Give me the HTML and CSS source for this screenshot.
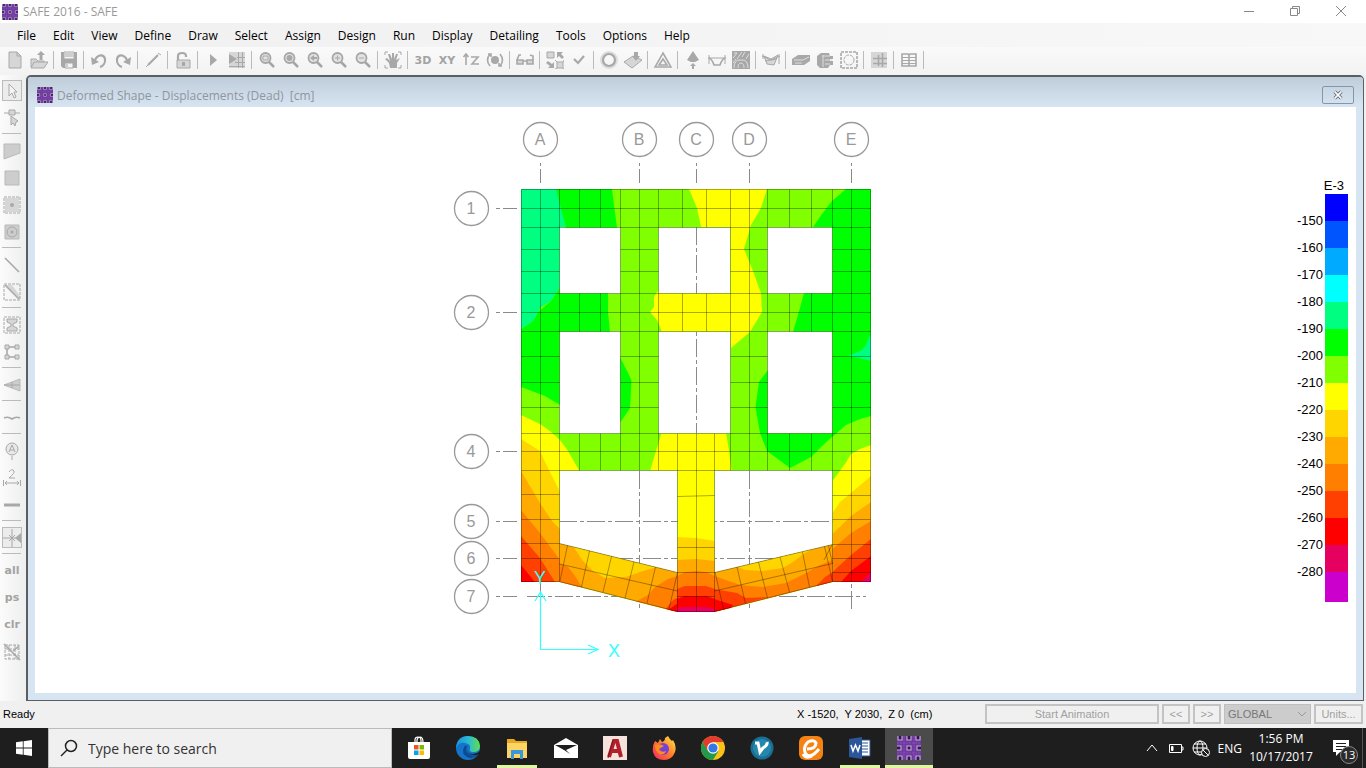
FILE: index.html
```html
<!DOCTYPE html>
<html lang="en">
<head>
    <meta charset="UTF-8">
    <meta name="viewport" content="width=device-width, initial-scale=1.0">
    <title>SAFE 2016 - SAFE</title>
    <link rel="stylesheet" href="styles.css">
</head>
<body>

<!-- Shared symbols -->
<svg class="symbols" aria-hidden="true">
    <symbol id="safe" viewBox="0 0 24 24">
        <rect width="24" height="24" fill="#7038a2"/>
        <path d="M0 7H24M0 17H24M7 0V24M17 0V24" stroke="#8352b0" stroke-width="1" stroke-dasharray="2 1"/>
        <g fill="#35184f" stroke="#c3b0d2" stroke-width="1.1">
            <path d="M1 0V4H5V0M10 0V4H14V0M19 0V4H23V0M1 24V20H5V24M10 24V20H14V24M19 24V20H23V24"/>
            <path d="M0 10H4V14H0M24 10H20V14H24M10 10H14V14H10Z"/>
        </g>
    </symbol>
    <symbol id="lens" viewBox="0 0 18 18">
        <circle cx="7.5" cy="7" r="5" fill="#e2e2e2" stroke="#a6a6a6" stroke-width="1.8"/>
        <path d="M11 11L16 16" stroke="#a6a6a6" stroke-width="2.5"/>
    </symbol>
</svg>

<header class="titlebar">
    <svg class="app-icon"><use href="#safe"/></svg>
    <h1 class="app-name">SAFE 2016 - SAFE</h1>
    <div class="window-buttons">
        <button aria-label="Minimize"><svg viewBox="0 0 12 12"><path d="M1 6.5H11"/></svg></button>
        <button aria-label="Restore"><svg viewBox="0 0 12 12"><path d="M1.5 3.5H8.5V10.5H1.5ZM3.5 3V1.5H10.5V8.5H9"/></svg></button>
        <button aria-label="Close"><svg viewBox="0 0 12 12"><path d="M1 1L11 11M11 1L1 11"/></svg></button>
    </div>
</header>

<nav class="menu">
    <button>File</button>
    <button>Edit</button>
    <button>View</button>
    <button>Define</button>
    <button>Draw</button>
    <button>Select</button>
    <button>Assign</button>
    <button>Design</button>
    <button>Run</button>
    <button>Display</button>
    <button>Detailing</button>
    <button>Tools</button>
    <button>Options</button>
    <button>Help</button>
</nav>

<div class="toolbar">
    <button aria-label="New model"><svg viewBox="0 0 18 18"><path class="soft" d="M3 1H11L15 5V17H3Z"/><path d="M11 1V5H15"/></svg></button>
    <button aria-label="Open"><svg viewBox="0 0 18 18"><path class="soft" d="M1 8H6L8 10H14V16H1Z"/><path class="soft" d="M4 11H18L14 17H1Z"/><path class="dark" d="M11 0L15 4H12.5V9H9.5V4H7Z"/></svg></button>
    <span class="sep"></span>
    <button aria-label="Save"><svg viewBox="0 0 18 18"><path class="dark" d="M1 1H17V17H3L1 15Z"/><path class="light" d="M4 1H14V8H4ZM5 12H13V17H5Z"/><path d="M5 3H13M5 5H13M7 13V16"/></svg></button>
    <span class="sep"></span>
    <button aria-label="Undo"><svg viewBox="0 0 18 18"><path class="dark" d="M1 6L2 14L9 11Z"/><path class="arc" d="M5 9C8 3 14 3 15 8C15.5 12 13 15 10 16"/></svg></button>
    <button aria-label="Redo"><svg viewBox="0 0 18 18"><path class="dark" d="M17 6L16 14L9 11Z"/><path class="arc" d="M13 9C10 3 4 3 3 8C2.5 12 5 15 8 16"/></svg></button>
    <span class="sep"></span>
    <button aria-label="Refresh"><svg viewBox="0 0 18 18"><path class="arc" d="M4 14L14 4"/><path d="M2 16L4 14M14 2L17 4"/></svg></button>
    <span class="sep"></span>
    <button aria-label="Lock model"><svg viewBox="0 0 18 18"><path class="arc" d="M4 10V5Q4 2 8 2Q12 2 12 5V6"/><path class="soft" d="M3 9H16V17H3Z"/><path class="dark" d="M8 11H11V15H8Z"/></svg></button>
    <span class="sep"></span>
    <button aria-label="Run analysis"><svg viewBox="0 0 18 18"><path class="dark" d="M6 3L13 9L6 15Z"/></svg></button>
    <button aria-label="Run design"><svg viewBox="0 0 18 18"><path class="soft plain" d="M1 1H17V17H1Z"/><path class="dark" d="M1 3L9 8L1 13Z"/><path d="M1 15.5H17M7 11.5H17M10.5 1V17M14.5 1V17M9 6.5H17"/></svg></button>
    <span class="sep"></span>
    <button aria-label="Rubber band zoom"><svg viewBox="0 0 18 18"><use href="#lens"/><path d="M5 5H10V9H5Z"/></svg></button>
    <button aria-label="Zoom all"><svg viewBox="0 0 18 18"><use href="#lens"/><circle class="dark" cx="7.5" cy="7" r="3"/></svg></button>
    <button aria-label="Previous zoom"><svg viewBox="0 0 18 18"><use href="#lens"/><path class="dark" d="M4 7L8 4V6H11V8H8V10Z"/></svg></button>
    <button aria-label="Zoom in"><svg viewBox="0 0 18 18"><use href="#lens"/><path d="M5 7H10M7.5 4.5V9.5"/></svg></button>
    <button aria-label="Zoom out"><svg viewBox="0 0 18 18"><use href="#lens"/><path d="M5 7H10"/></svg></button>
    <span class="sep"></span>
    <button aria-label="Pan"><svg viewBox="0 0 18 18"><path d="M1 4V1H4M14 1H17V4M1 14V17H4M14 17H17V14"/><path class="dark" d="M6 17L5 12L1 8L3 7L6 10L4 3L6 3L8 8V2H10V8L12 3H14L12 9L16 7L13 12V17Z"/></svg></button>
    <span class="sep"></span>
    <button class="view">3D</button>
    <button class="view">XY</button>
    <button class="view" aria-label="Elevation view"><svg viewBox="0 0 18 18"><path class="mid" d="M4 14V4M1.5 6L4 3L6.5 6M9 6H16L10 13H17"/></svg></button>
    <button aria-label="Rotate view"><svg viewBox="0 0 18 18"><circle class="dark" cx="9" cy="9" r="4"/><path class="mid" d="M4 3Q-1 9 4 15M14 3Q19 9 14 15M2 3H5V6M16 15H13V12"/></svg></button>
    <span class="sep"></span>
    <button aria-label="Display options"><svg viewBox="0 0 18 18"><path class="mid soft" d="M1 9H7V13H1ZM11 9H17V13H11Z"/><path class="mid" d="M7 10H11M1 9L3 4H5M17 9V5L14 4"/></svg></button>
    <span class="sep"></span>
    <button aria-label="Assign to group"><svg viewBox="0 0 18 18"><path class="soft" d="M1 1H8V7H1ZM11 11H17V17H11Z"/><path class="dark" d="M11 1H17L15 3L18 6L16 8L13 5L11 7ZM8 17H2L4 15L0 12L2 10L6 13L8 11Z"/><path d="M9 9L11 11M17 11L18 9M17 17L18 18M11 17L9 18"/></svg></button>
    <button aria-label="Check"><svg viewBox="0 0 18 18"><path class="arc" d="M4 8L8 12L14 5"/></svg></button>
    <span class="sep"></span>
    <button aria-label="Show undeformed"><svg viewBox="0 0 18 18"><circle class="halo" cx="9" cy="9" r="7"/><circle class="arc" cx="9" cy="9" r="6"/></svg></button>
    <button aria-label="Show loads"><svg viewBox="0 0 18 18"><path class="soft" d="M0 11L9 5L18 9L8 17Z"/><path class="dark" d="M10 1H14V5H16L12 10L8 5H10Z"/></svg></button>
    <span class="sep"></span>
    <button aria-label="Show deformed shape"><svg viewBox="0 0 18 18"><path class="mid" d="M9 2L17 16H1ZM9 8L13 14H5Z"/></svg></button>
    <span class="sep"></span>
    <button aria-label="Show reactions"><svg viewBox="0 0 18 18"><path class="dark" d="M9 0L15 9L11 11H7L3 9ZM9 12L12 15H10V18H8V15H6Z"/></svg></button>
    <button aria-label="Show strip forces"><svg viewBox="0 0 18 18"><path d="M0 7H18M1 4V13M17 4V13"/><path class="mid" d="M1 7Q4 8 6 14H12Q14 8 17 7"/></svg></button>
    <button aria-label="Show slab stresses"><svg viewBox="0 0 18 18"><path class="dark" d="M0 0H18V18H0Z"/><path class="pale" d="M2 17Q2 8 9 9Q16 8 16 17M6 17Q6 12 9 12Q12 12 12 17M1 7L5 2M5 8L10 1M10 6L13 1M14 8L17 3M1 12L4 8M2 2H5"/></svg></button>
    <span class="sep"></span>
    <button aria-label="Show design"><svg viewBox="0 0 18 18"><path class="soft" d="M2 5L5 13L12 14L16 4L9 8Z"/><path d="M0 5L9 9L18 5M1 3V8M17 3V13M3 10L15 8"/></svg></button>
    <span class="sep"></span>
    <button aria-label="Beam section"><svg viewBox="0 0 18 18"><path class="dark" d="M0 8L6 4H18V10L12 14H0Z"/><path class="pale" d="M2 9H11L17 6M3 12H10"/></svg></button>
    <button aria-label="Slab section"><svg viewBox="0 0 18 18"><path class="dark" d="M1 5L5 2H13L14 5H17V8H14V10H17V14H14L12 17H4L1 14Z"/><path class="pale" d="M6 5H14M9 9H16M9 13H14M7 4V16"/></svg></button>
    <button aria-label="Select region"><svg viewBox="0 0 18 18"><path class="dash mid" d="M1 1H17V17H1Z"/><circle class="dash" cx="9" cy="9" r="5"/></svg></button>
    <span class="sep"></span>
    <button aria-label="Show grid"><svg viewBox="0 0 18 18"><path class="soft plain" d="M1 1H17V17H1Z"/><path class="mid" d="M3 7.5H17M3 12.5H17M8.5 4V15M12.5 2V16"/></svg></button>
    <span class="sep"></span>
    <button aria-label="Show tables"><svg viewBox="0 0 18 18"><path class="mid" d="M2 3H8L9 4L10 3H16V15H2ZM9 4V15"/><path d="M2 6.5H16M2 9.5H16M2 12.5H16"/></svg></button>
    <span class="sep"></span>
</div>

<main class="workspace">
    <div class="side-tools">
        <button class="pressed" aria-label="Select"><svg viewBox="0 0 18 18"><path class="light" d="M6 2V14L9 11L11 16L13 15L11 10H14Z"/></svg></button>
        <button aria-label="Reshape"><svg viewBox="0 0 18 18"><path d="M1 4H17"/><path class="soft" d="M6 1H12V6H6ZM8 7V16L10 14L12 17L13 13L15 12Z"/></svg></button>
        <span class="rule"></span>
        <button aria-label="Draw area"><svg viewBox="0 0 18 18"><path class="shade" d="M1 2H17V11L1 17Z"/></svg></button>
        <button aria-label="Draw rectangle"><svg viewBox="0 0 18 18"><path class="shade" d="M2 2H16V16H2Z"/></svg></button>
        <button aria-label="Quick draw area"><svg viewBox="0 0 18 18"><path class="soft plain" d="M2 2H16V16H2Z"/><path class="dash" d="M1 1H17V17H1Z"/><circle class="dark" cx="9" cy="9" r="2"/></svg></button>
        <button aria-label="Draw around point"><svg viewBox="0 0 18 18"><path class="shade" d="M2 2H16V16H2Z"/><circle cx="9" cy="9" r="5"/><circle class="dark" cx="9" cy="9" r="1.5"/></svg></button>
        <span class="rule"></span>
        <button aria-label="Draw line"><svg viewBox="0 0 18 18"><path class="mid" d="M2 2L16 16"/></svg></button>
        <button aria-label="Quick draw line"><svg viewBox="0 0 18 18"><path class="soft plain" d="M2 2H9L17 13V16Z"/><path class="dash" d="M1 1H17V17H1Z"/><path class="mid" d="M2 2L16 16"/></svg></button>
        <span class="rule"></span>
        <button aria-label="Draw column"><svg viewBox="0 0 18 18"><path class="dash" d="M1 1H17V17H1Z"/><path class="soft" d="M4 3H14V6L10 8V10L14 12V15H4V12L8 10V8L4 6Z"/></svg></button>
        <button aria-label="Draw wall"><svg viewBox="0 0 18 18"><path class="mid" d="M15 4H4V14H15"/><path class="soft" d="M2 2H6V6H2ZM12 2H16V6H12ZM2 12H6V16H2ZM12 12H16V16H12Z"/></svg></button>
        <span class="rule"></span>
        <button aria-label="Draw ramp"><svg viewBox="0 0 18 18"><path class="shade" d="M1 9L17 3V15Z"/><path d="M1 9H17M9 6V12"/></svg></button>
        <span class="rule"></span>
        <button aria-label="Draw tendon"><svg viewBox="0 0 18 18"><path class="mid" d="M1 9Q5 7 9 10Q13 7 17 9"/></svg></button>
        <span class="rule"></span>
        <button aria-label="Draw grid"><svg viewBox="0 0 18 18"><circle class="pale-fill" cx="9" cy="7" r="6"/><path d="M6 10L9 3L12 10M7 8H11M9 14V18"/></svg></button>
        <button aria-label="Draw dimension"><svg viewBox="0 0 18 18"><path d="M0.5 11V17M17.5 11V17M2 14H16M4 12L2 14L4 16M14 12L16 14L14 16M6 3Q9 -1 11 2Q12 4 6 9H12"/></svg></button>
        <button aria-label="Draw strip"><svg viewBox="0 0 18 18"><path class="thick" d="M1 9H17"/></svg></button>
        <span class="rule"></span>
        <button class="pressed" aria-label="Snap options"><svg viewBox="0 0 18 18"><path class="dark" d="M18 4V14L12 9Z"/><path d="M0 9H18M9 0V18M6 6L12 12M12 6L6 12"/></svg></button>
        <span class="rule"></span>
        <button class="word">all</button>
        <button class="word">ps</button>
        <button class="word">clr</button>
        <button aria-label="Clear intersecting"><svg viewBox="0 0 18 18"><path class="dash" d="M2 2H16V16H2ZM6 2V16M12 2V16M2 6H16M2 12H16"/><path class="mid" d="M1 1L17 17M10 8L16 3"/></svg></button>
    </div>

    <section class="document">
        <div class="document-title">
            <svg class="app-icon"><use href="#safe"/></svg>
            <h2>Deformed Shape - Displacements (Dead)&nbsp; [cm]</h2>
            <button class="document-close" aria-label="Close view">
                <svg viewBox="0 0 12 12"><path d="M2 2L10 10M10 2L2 10" stroke="#56606c" stroke-width="4"/><path d="M2 2L10 10M10 2L2 10" stroke="#fff" stroke-width="2"/></svg>
            </button>
        </div>
        <div class="canvas">
            <svg class="model" viewBox="35 107 1250 586" preserveAspectRatio="xMidYMid meet" role="img" aria-label="Displacement contours">
                <defs>
                    <clipPath id="slab">
                        <path clip-rule="evenodd" d="M521 189H871V582H832.5L714.5 612H677.5L559.5 582H521Z
                            M559.5 227.5H620.5V293.5H559.5Z M658.5 227.5H730.5V293.5H658.5Z M767.5 227.5H832.5V293.5H767.5Z
                            M559.5 331.5H620.5V433.5H559.5Z M658.5 331.5H730.5V433.5H658.5Z M767.5 331.5H832.5V433.5H767.5Z
                            M559.5 470.5H677.5V572.5L559.5 543.5Z M714.5 470.5H832.5V544.5L714.5 572.5Z"/>
                    </clipPath>
                </defs>

                <!-- Grid lines -->
                <g class="gridline">
                    <path d="M540.5 183V163M639.5 183V163M696.5 183V163M749.5 183V163M851.5 183V163"/>
                    <path d="M517 208.5H496M517 312.5H496M517 451.5H496M517 521.5H496M517 558.5H496M517 596.5H496"/>
                </g>
                <g class="gridline long">
                    <path d="M696.5 227V433M639.5 471V609M749.5 471V609M851.5 609V581M540.5 581V596"/>
                    <path d="M559 521.5H833M559 558.5H833M527 596.5H866"/>
                </g>

                <!-- Displacement contours -->
                <g clip-path="url(#slab)">
                    <path fill="#80ff00" d="M521 189H871V612H521Z"/>
                    <path fill="#00ff00" d="M556 189H612L614 205L617 228H566L556 215Z"/>
                    <path fill="#00ff00" d="M521 329L533 321L538 312L551 301L560 287V293H608V312L610 332H560V405L545 396L521 387Z"/>
                    <path fill="#00ff00" d="M620 357L631.5 380L630 408L620 423Z"/>
                    <path fill="#00ff80" d="M521 189H556L560 205L566 227H560V287L551 301L541 307L538 312L533 321L521 329Z"/>
                    <path fill="#00ff00" d="M846 189H871V416L860 419L846 425L832 437L822 446L811 457L790 468L767 451L760 433L755.5 407L759 382L768 370L793 332L800 308L804 293L832 280V227H813L822 214L832 201Z"/>
                    <path fill="#00ff80" d="M871 333L866 345L862 350L848 356L859 358L871 361Z"/>
                    <path fill="#ffff00" d="M689 189H767L761 208L751 225L744 249L753 271L758 285L761 293L762 312L750 332L731 348V332H662L657 320L650 312L654 307V297L659 289V293H730V227H701L697 208Z"/>

                    <!-- Left column -->
                    <path fill="#ffff00" d="M521 415L540 424L550 431L560 440L568 451L579.5 471H560V582H521Z"/>
                    <path fill="#ffd500" d="M521 439L540 451L545 462L560 492V582H521Z"/>
                    <path fill="#ffaa00" d="M521 471L540 503L552 521L560 529V582H521Z"/>

                    <!-- Inclined beams -->
                    <path fill="#ffaa00" d="M559.5 530L677.5 572.5V612L559.5 582ZM714.5 572.5L832.5 530V582L714.5 612Z"/>
                    <path fill="#ffd500" d="M569 540L583 561L593 571L605 578L626 577L643 571L657 567Z"/>
                    <path fill="#ffd500" d="M738 567L745 570L763 571L783 568L793 562L805 553L819 546Z"/>
                    <path fill="#ff8000" d="M633 603L648 595L655 587L668 579L677.5 576V612H650Z"/>
                    <path fill="#ff8000" d="M714.5 576L740 585L763 587L786 583L806 573L820 565L832.5 560V582L714.5 612Z"/>
                    <path fill="#ff8000" d="M521 510L540 533L560 560V564L568 567L575 576L582 587H521Z"/>
                    <path fill="#ff4000" d="M521 536L540 558L555 582H521Z"/>
                    <path fill="#ff0000" d="M521 565L535 582H521Z"/>
                    <path fill="#ff4000" d="M665 610L672 601L678 597V612ZM714 589L737 593L746 598L768 597L714 612ZM815 587L825 577L833 572V582Z"/>
                    <path fill="#ff0000" d="M668 610L678 603V612ZM714 599L733 605L730 609L714 612Z"/>

                    <!-- Centre stem -->
                    <path fill="#ffff00" d="M661.5 433H726L729 450L731.5 471H714.5V612H677.5V471H650Z"/>
                    <path fill="#ffd500" d="M677 537L696 538L715 541V612H677Z"/>
                    <path fill="#ffaa00" d="M677 560L696 559L715 561V612H677Z"/>
                    <path fill="#ff8000" d="M677 576L685 572L696 571L706 572L715 576V612H677Z"/>
                    <path fill="#ff4000" d="M677 589L685 586H706L715 589V612H677Z"/>
                    <path fill="#ff0000" d="M677 599L685 596H706L715 599V612H677Z"/>
                    <path fill="#e60060" d="M677 608L685 607H706L715 609V612H677Z"/>

                    <!-- Right column -->
                    <path fill="#ffff00" d="M871 445L860 449L851 454L845 464L832.5 481V545H871Z"/>
                    <path fill="#ffd500" d="M871 476L851 493L840 502L832.5 513V545H871Z"/>
                    <path fill="#ffaa00" d="M871 502L851 516L832.5 534V560H871Z"/>
                    <path fill="#ff8000" d="M871 521L851 533L832.5 549V582H871Z"/>
                    <path fill="#ff4000" d="M871 539L851 555L832.5 572V582H871Z"/>
                    <path fill="#ff0000" d="M871 556L851 571L841 582H871Z"/>
                    <path fill="#e60060" d="M871 572L861 582H871Z"/>
                </g>

                <!-- Finite element mesh -->
                <g class="mesh">
                    <path d="M521.5 189.5V581.5M540.5 189.5V581.5M559.5 189.5V581.5M832.5 189.5V581.5M851.5 189.5V581.5M870.5 189.5V581.5"/>
                    <path d="M620.5 189.5V470.5M639.5 189.5V470.5M658.5 189.5V470.5M730.5 189.5V470.5M749.5 189.5V470.5M767.5 189.5V470.5"/>
                    <path d="M579.5 189.5V227.5M600.5 189.5V227.5M682.5 189.5V227.5M706.5 189.5V227.5M789.5 189.5V227.5M811.5 189.5V227.5"/>
                    <path d="M579.5 293.5V331.5M600.5 293.5V331.5M682.5 293.5V331.5M706.5 293.5V331.5M789.5 293.5V331.5M811.5 293.5V331.5"/>
                    <path d="M579.5 433.5V470.5M600.5 433.5V470.5M789.5 433.5V470.5M811.5 433.5V470.5M677.5 433.5V611.5M696.5 433.5V611.5M714.5 433.5V611.5"/>
                    <path d="M521.5 189.5H870.5M521.5 208.5H870.5M521.5 227.5H870.5M521.5 293.5H870.5M521.5 312.5H870.5M521.5 331.5H870.5M521.5 433.5H870.5M521.5 451.5H870.5M521.5 470.5H870.5"/>
                    <path d="M521.5 249.5H559.5M620.5 249.5H658.5M730.5 249.5H767.5M832.5 249.5H870.5M521.5 271.5H559.5M620.5 271.5H658.5M730.5 271.5H767.5M832.5 271.5H870.5"/>
                    <path d="M521.5 356.5H559.5M620.5 356.5H658.5M730.5 356.5H767.5M832.5 356.5H870.5M521.5 382.5H559.5M620.5 382.5H658.5M730.5 382.5H767.5M832.5 382.5H870.5M521.5 407.5H559.5M620.5 407.5H658.5M730.5 407.5H767.5M832.5 407.5H870.5"/>
                    <path d="M521.5 494.5H559.5M521.5 519.5H559.5M521.5 543.5H559.5M521.5 558.5H559.5M521.5 581.5H559.5"/>
                    <path d="M832.5 495.5H870.5M832.5 519.5H870.5M832.5 544.5H870.5M832.5 558.5H870.5M832.5 572.5H870.5M832.5 581.5H870.5"/>
                    <path d="M677.5 496.5L714.5 495.5M677.5 547.5H714.5M677.5 572.5H714.5M677.5 596.5H714.5M677.5 611.5H714.5"/>
                    <path d="M559.5 543.5L677.5 572.5M559.5 564L677.5 591M559.5 581.5L677.5 611.5M567.5 545.5L560 581M589.5 551L581.5 587M611.5 556.5L603 592M634 562L625 598M655.5 567L647 603M677.5 572.5L669 609"/>
                    <path d="M714.5 572.5L832.5 544.5M714.5 591L832.5 563.5M714.5 611.5L832.5 581.5M715 572L723.5 609M737 567L745.5 604M758.5 562L767.5 598M780 557L789.5 592M802.5 552L809.5 587M824.5 546.5L832.5 581.5M828.5 545.5L832.5 564M832 545L824 560"/>
                </g>

                <!-- Grid bubbles -->
                <g class="bubble">
                    <circle cx="540.5" cy="139.5" r="17"/><text x="540" y="145">A</text>
                    <circle cx="639.5" cy="139.5" r="17"/><text x="639" y="145">B</text>
                    <circle cx="696.5" cy="139.5" r="17"/><text x="696" y="145">C</text>
                    <circle cx="749.5" cy="139.5" r="17"/><text x="749" y="145">D</text>
                    <circle cx="851.5" cy="139.5" r="17"/><text x="851" y="145">E</text>
                    <circle cx="471.5" cy="208.5" r="17"/><text x="471" y="214">1</text>
                    <circle cx="471.5" cy="312.5" r="17"/><text x="471" y="318">2</text>
                    <circle cx="471.5" cy="451.5" r="17"/><text x="471" y="457">4</text>
                    <circle cx="471.5" cy="521.5" r="17"/><text x="471" y="527">5</text>
                    <circle cx="471.5" cy="558.5" r="17"/><text x="471" y="564">6</text>
                    <circle cx="471.5" cy="596.5" r="17"/><text x="471" y="602">7</text>
                </g>

                <!-- Axes -->
                <g class="axes">
                    <path d="M540.5 592V649.5H598M535 601L540.5 592L546 601M588 645L598 649.5L588 654"/>
                    <text x="540" y="584">Y</text>
                    <text x="614" y="657">X</text>
                </g>
            </svg>

            <div class="legend">
                <p class="legend-unit">E-3</p>
                <div class="legend-scale">
                    <ol class="legend-values">
                        <li>-150</li>
                        <li>-160</li>
                        <li>-170</li>
                        <li>-180</li>
                        <li>-190</li>
                        <li>-200</li>
                        <li>-210</li>
                        <li>-220</li>
                        <li>-230</li>
                        <li>-240</li>
                        <li>-250</li>
                        <li>-260</li>
                        <li>-270</li>
                        <li>-280</li>
                    </ol>
                    <div class="legend-colors">
                        <span class="c1"></span><span class="c2"></span><span class="c3"></span>
                        <span class="c4"></span><span class="c5"></span><span class="c6"></span>
                        <span class="c7"></span><span class="c8"></span><span class="c9"></span>
                        <span class="c10"></span><span class="c11"></span><span class="c12"></span>
                        <span class="c13"></span><span class="c14"></span><span class="c15"></span>
                    </div>
                </div>
            </div>
        </div>
    </section>
</main>

<footer class="status">
    <span class="status-text">Ready</span>
    <span class="status-coords">X -1520,&nbsp; Y 2030,&nbsp; Z 0&nbsp; (cm)</span>
    <div class="status-controls">
        <button class="animate" disabled>Start Animation</button>
        <button class="step" disabled>&lt;&lt;</button>
        <button class="step" disabled>&gt;&gt;</button>
        <div class="coord-system">
            <select aria-label="Coordinate system" disabled>
                <option>GLOBAL</option>
            </select>
            <svg viewBox="0 0 10 6"><path d="M1 1L5 5L9 1"/></svg>
        </div>
        <button class="units" disabled>Units...</button>
    </div>
</footer>

<div class="taskbar">
    <button class="start" aria-label="Start">
        <svg viewBox="0 0 16 16"><path fill="#fff" d="M0 2.3L6.8 1.3V7.6H0ZM7.6 1.2L16 0V7.6H7.6ZM0 8.4H6.8V14.7L0 13.7ZM7.6 8.4H16V16L7.6 14.8Z"/></svg>
    </button>
    <label class="search">
        <svg viewBox="0 0 18 18"><circle cx="11" cy="7" r="5.5"/><path d="M7 11L1 17"/></svg>
        <input type="text" placeholder="Type here to search" aria-label="Search">
    </label>
    <div class="tasks">
        <button aria-label="Microsoft Store"><svg viewBox="0 0 24 24">
            <path fill="none" stroke="#fff" stroke-width="1.2" d="M8 6V4Q8 1 11 1Q14 1 14 4V6M10 6V4Q10 2 13 1Q16 1 16 6"/>
            <path fill="#fff" d="M1 6H23V21Q23 23 21 23H3Q1 23 1 21Z"/>
            <path fill="#f25022" d="M7 9H11.5V13.5H7Z"/><path fill="#7fba00" d="M12.5 9H17V13.5H12.5Z"/>
            <path fill="#00a4ef" d="M7 14.5H11.5V19H7Z"/><path fill="#ffb900" d="M12.5 14.5H17V19H12.5Z"/>
        </svg></button>
        <button aria-label="Edge"><svg viewBox="0 0 24 24">
            <defs>
                <linearGradient id="edgeTop"><stop offset="0" stop-color="#1b8fdc"/><stop offset=".5" stop-color="#29b9d5"/><stop offset="1" stop-color="#5ee04e"/></linearGradient>
            </defs>
            <circle cx="12" cy="12" r="12" fill="#1474c9"/>
            <path fill="url(#edgeTop)" d="M0 12Q1 0 12 0Q23 0 24 10Q24 16 17 16Q13 16 14 13Q15 8 9 7Q3 6 0 12Z"/>
            <path fill="#0c4a94" d="M8 11Q5 18 11 21Q16 24 22 19Q17 21 13 18Q9 15 11 10Q9 9 8 11Z"/>
            <path fill="#1e1e1e" d="M14 10Q11 9 11 13Q12 18 17 18Q21 18 24 15V17L21 19Q15 20 12 16Q10 12 12 10Z"/>
        </svg></button>
        <button class="running" aria-label="File Explorer"><svg viewBox="0 0 24 24">
            <path fill="#e9a820" d="M2 3H9L11 5H22V9H2Z"/><path fill="#fcd462" d="M2 7H22V22H2Z"/>
            <path fill="#3a96dd" d="M6 14H18V23H15V18H9V23H6Z"/>
        </svg></button>
        <button aria-label="Mail"><svg viewBox="0 0 24 24">
            <path fill="#fff" d="M0 9L12 2L24 9V22H0Z"/><path fill="#1e1e1e" d="M1 9H23L12 14L16 18L10 14Z"/>
        </svg></button>
        <button aria-label="AutoCAD"><svg viewBox="0 0 24 24">
            <rect width="24" height="24" fill="#f5e3dc"/>
            <path fill="none" stroke="#b3202c" stroke-width="4" d="M6 21L11 5H14L18 21M8 15H17"/><path fill="none" stroke="#7c1420" d="M5 22L10 4"/>
        </svg></button>
        <button aria-label="Firefox"><svg viewBox="0 0 24 24">
            <defs>
                <linearGradient id="fire" x1="1" y1="0" x2="0" y2="1"><stop offset="0" stop-color="#fff04a"/><stop offset=".5" stop-color="#ff7a28"/><stop offset="1" stop-color="#f5216c"/></linearGradient>
            </defs>
            <path fill="url(#fire)" d="M3 5L6 7L8 3L10 6Q13 5 13 2L16 0Q18 4 20 5L21 4Q25 10 23 16Q20 24 12 24Q3 24 1 16Q0 10 3 5Z"/>
            <circle cx="11" cy="13" r="6" fill="#7542d8"/><path fill="#ff8a1e" d="M3 9Q8 7 12 10L7 13Q9 17 14 15Q12 20 7 18Q3 15 3 9Z"/>
        </svg></button>
        <button aria-label="Chrome"><svg viewBox="0 0 24 24">
            <circle cx="12" cy="12" r="12" fill="#fbc116"/>
            <path fill="#e33b2e" d="M1.6 6A12 12 0 0 1 22.4 6H12L6.5 15Z"/><path fill="#229a4a" d="M1.6 6A12 12 0 0 0 12 24L17.5 15L7 15Z"/>
            <circle cx="12" cy="12" r="5.8" fill="#fff"/><circle cx="12" cy="12" r="4.6" fill="#3478e5"/>
        </svg></button>
        <button aria-label="V"><svg viewBox="0 0 24 24">
            <circle cx="12" cy="12" r="11.5" fill="#196f93"/><circle cx="12" cy="12" r="9" fill="#2587ad"/>
            <path fill="none" stroke="#fff" stroke-width="3" d="M5 7H8L10 16L13 12Q18 9 17 6"/>
        </svg></button>
        <button aria-label="E"><svg viewBox="0 0 24 24">
            <rect width="24" height="24" rx="6" fill="#f58212"/>
            <path fill="none" stroke="#fff" stroke-width="3" d="M8 13Q17 13 17 7Q15 3 9 6Q3 12 7 18Q12 23 20 13M4 18Q7 23 13 20"/>
        </svg></button>
        <button class="running" aria-label="Word"><svg viewBox="0 0 24 24">
            <path fill="#fff" stroke="#2b579a" d="M12 4H22V20H12Z"/><path stroke="#2b579a" d="M14 7H20M14 10H20M14 13H20M14 16H20"/>
            <path fill="#2b579a" d="M1 3L14 1V23L1 21Z"/><path fill="none" stroke="#fff" stroke-width="1.5" d="M3 9L5 15L7.5 9L10 15L12 9"/>
        </svg></button>
        <button class="running active" aria-label="SAFE"><svg><use href="#safe"/></svg></button>
    </div>
    <div class="tray">
        <svg class="tray-icon" viewBox="0 0 16 16"><path d="M3 11L8 5L13 11"/></svg>
        <svg class="tray-icon" viewBox="0 0 16 16"><path d="M1.5 4.5H13.5V12.5H1.5ZM14 7H15V10H14"/><path fill="#fff" d="M3.5 6.5H5V10.5H3.5Z"/></svg>
        <svg class="tray-icon globe" viewBox="0 0 18 18"><circle cx="8" cy="9" r="7"/><ellipse cx="8" cy="9" rx="3" ry="7"/><path d="M1 9H15M2 5H14M2 13H10"/><circle cx="13.5" cy="13.5" r="4" fill="#1e1e1e"/><path d="M11 11L16 16"/></svg>
        <span class="language">ENG</span>
        <div class="clock">
            <span>1:56 PM</span>
            <span>10/17/2017</span>
        </div>
        <button class="notices" aria-label="Notifications">
            <svg viewBox="0 0 18 18"><path fill="#fff" d="M1 1H17V13H8L4 17V13H1Z"/><path stroke="#1e1e1e" d="M4 4.5H14M4 7.5H14M4 10.5H10"/></svg>
            <span class="badge">13</span>
        </button>
    </div>
</div>

</body>
</html>
```
FILE: styles.css
```css
* {
    box-sizing: border-box;
}
body {
    margin: 0;
    min-height: 100vh;
    display: flex;
    flex-direction: column;
    background: #f0f0f0;
    font-family: "Open Sans", "Noto Sans", sans-serif;
    font-size: 12px;
    color: #000;
}
button {
    padding: 0;
    border: none;
    background: none;
    font: inherit;
    color: inherit;
}
h1, h2, p, ol {
    margin: 0;
    padding: 0;
    font-size: 12px;
    font-weight: normal;
}
.symbols {
    display: none;
}
.app-icon {
    width: 16px;
    height: 16px;
}

/* Title bar */
.titlebar {
    display: flex;
    align-items: center;
    height: 23px;
    padding: 0 2px;
    background: #fff;
    color: #999;
}
.app-name {
    flex: 1;
    margin-left: 5px;
}
.window-buttons {
    display: flex;
}
.window-buttons button {
    width: 46px;
    height: 22px;
}
.window-buttons svg {
    display: block;
    width: 12px;
    height: 12px;
    margin: 4px auto 6px;
    fill: none;
    stroke: #888;
}

/* Menu */
.menu {
    display: flex;
    gap: 1px;
    height: 24px;
    padding-left: 9px;
    background: linear-gradient(to right, #f0f0f0, #f8f8f8);
}
.menu button {
    padding: 0 8px;
}

/* Toolbars */
.toolbar {
    display: flex;
    align-items: center;
    height: 28px;
    padding: 0 0 2px 3px;
    background: linear-gradient(#fafafa, #f2f2f2);
}
.toolbar button {
    width: 24px;
    height: 24px;
}
.toolbar svg, .side-tools svg {
    display: block;
    width: 18px;
    height: 18px;
    margin: auto;
    fill: none;
    stroke: #a8a8a8;
}
.toolbar .view, .side-tools .word {
    font-family: "DejaVu Sans", Verdana, sans-serif;
    font-size: 11px;
    font-weight: bold;
    color: #a3a3a3;
}
.sep {
    width: 1px;
    height: 18px;
    margin: 0 3px 0 2px;
    background: #bbb;
}
.toolbar .soft, .side-tools .soft {
    fill: #d6d6d6;
}
.shade {
    fill: #cdcdcd;
    stroke: #b9b9b9;
}
.light {
    fill: #f4f4f4;
}
.pale-fill {
    fill: #e8e8e8;
}
.dark {
    fill: #a8a8a8;
    stroke: none;
}
.plain {
    stroke: none;
}
.mid {
    stroke-width: 1.6;
}
.arc {
    stroke-width: 2.2;
}
.thick {
    stroke-width: 3;
}
.pale {
    stroke: #ddd;
}
.halo {
    stroke: #ddd;
    stroke-width: 4;
}
.dash {
    stroke-dasharray: 3 1;
}

.workspace {
    flex: 1;
    display: flex;
}
.side-tools {
    display: flex;
    flex-direction: column;
    width: 26px;
    padding-top: 2px;
    background: linear-gradient(to right, #fbfbfb, #eee);
}
.side-tools button {
    width: 24px;
    height: 27px;
}
.side-tools .pressed {
    height: 21px;
    width: 20px;
    margin: 3px 2px;
    border: 1px solid #bbb;
    background: #ececec;
}
.rule {
    height: 1px;
    margin: 2px 5px 3px 2px;
    background: #bbb;
}

/* Document window */
.document {
    flex: 1;
    display: flex;
    flex-direction: column;
    margin-right: 2px;
    padding: 0 7px 7px;
    border: 2px solid #5b5f63;
    border-width: 2px 1px 1px 2px;
    border-radius: 5px 5px 0 0;
    background: #d7e4f1;
}
.document-title {
    display: flex;
    align-items: center;
    height: 30px;
    margin: 0 -7px;
    padding: 6px 9px 0;
    border-radius: 3px 3px 0 0;
    background: linear-gradient(#bfcddb, #d7e4f1);
    color: #8e969e;
}
.document-title h2 {
    flex: 1;
    margin-left: 4px;
}
.document-close {
    width: 32px;
    height: 18px;
    border: 1px solid #8496a9;
    border-radius: 2px;
}
.document-close svg {
    display: block;
    width: 12px;
    height: 10px;
    margin: auto;
}
.canvas {
    flex: 1;
    display: flex;
    background: #fff;
}
.model {
    flex: 1;
    min-width: 0;
    font-family: "Liberation Sans", Arial, sans-serif;
    text-anchor: middle;
}
.gridline {
    stroke: #8a8a8a;
    stroke-dasharray: 14 3 4 3;
}
.long {
    stroke-dasharray: 18 3 4 3;
}
.mesh {
    fill: none;
    stroke: #000;
    stroke-opacity: .33;
}
.bubble circle {
    fill: #fff;
    stroke: #999;
    stroke-width: 1.3;
}
.bubble text {
    fill: #999;
    font-size: 16px;
}
.axes path {
    fill: none;
    stroke: #3ff;
    stroke-width: 1.2;
}
.axes text {
    fill: #3ff;
    font-size: 18px;
}

/* Legend */
.legend {
    width: 71px;
    padding: 71px 8px 0 0;
    font-family: "Liberation Sans", Arial, sans-serif;
}
.legend-unit {
    padding-right: 4px;
    font-size: 13px;
    line-height: 16px;
    text-align: right;
}
.legend-scale {
    display: flex;
    justify-content: flex-end;
    gap: 2px;
}
.legend-values {
    padding-top: 13px;
    font-size: 13px;
    line-height: 27px;
    list-style: none;
}
.legend-colors span {
    display: block;
    width: 23px;
    height: 27px;
}
.legend-colors .c1 { background: #0000ff; }
.legend-colors .c2 { background: #0055ff; }
.legend-colors .c3 { background: #00aaff; }
.legend-colors .c4 { background: #00ffff; }
.legend-colors .c5 { background: #00ff80; }
.legend-colors .c6 { background: #00ff00; }
.legend-colors .c7 { background: #80ff00; }
.legend-colors .c8 { background: #ffff00; }
.legend-colors .c9 { background: #ffd500; }
.legend-colors .c10 { background: #ffaa00; }
.legend-colors .c11 { background: #ff8000; }
.legend-colors .c12 { background: #ff4000; }
.legend-colors .c13 { background: #ff0000; }
.legend-colors .c14 { background: #e60060; }
.legend-colors .c15 { height: 30px; background: #cc00cc; }

/* Status bar */
.status {
    display: flex;
    align-items: center;
    height: 27px;
    padding: 0 3px 2px;
    font-family: "Liberation Sans", Arial, sans-serif;
    font-size: 11px;
}
.status-text {
    flex: 1;
}
.status-coords {
    width: 188px;
}
.status-controls {
    display: flex;
    gap: 3px;
}
.status-controls button {
    height: 20px;
    border: 2px solid #c3c3c3;
    color: #a0a0a0;
}
.animate {
    width: 174px;
}
.step {
    width: 28px;
}
.units {
    width: 49px;
}
.coord-system {
    position: relative;
}
.coord-system select {
    display: block;
    width: 87px;
    height: 20px;
    padding: 0 3px;
    border: 1px solid #bfbfbf;
    border-radius: 0;
    appearance: none;
    background: #ccc;
    font: inherit;
    color: #777;
    opacity: 1;
}
.coord-system svg {
    position: absolute;
    top: 7px;
    right: 4px;
    width: 10px;
    height: 6px;
    fill: none;
    stroke: #999;
}

/* Taskbar */
.taskbar {
    display: flex;
    height: 40px;
    background: #1e1e1e;
    color: #fff;
}
.start {
    width: 48px;
}
.start svg {
    display: block;
    width: 16px;
    height: 16px;
    margin: auto;
}
.search {
    display: flex;
    align-items: center;
    width: 344px;
    padding-left: 11px;
    border: 1px solid #bbb;
    background: #f0f0f0;
}
.search svg {
    width: 18px;
    height: 18px;
    fill: none;
    stroke: #222;
    stroke-width: 1.5;
}
.search input {
    flex: 1;
    min-width: 0;
    margin-left: 10px;
    padding: 0;
    border: none;
    background: none;
    font: inherit;
    font-size: 14px;
}
.search input::placeholder {
    color: #333;
}
.tasks {
    flex: 1;
    display: flex;
    gap: 1px;
    padding-left: 3px;
}
.tasks button {
    width: 48px;
}
.tasks svg {
    display: block;
    width: 24px;
    height: 24px;
    margin: auto;
}
.tasks .running {
    background: linear-gradient(#dff7a0, #dff7a0) bottom / 40px 3px no-repeat;
}
.tasks .active {
    background: linear-gradient(#dff7a0, #dff7a0) bottom / 48px 3px no-repeat #4b4b4b;
}
.tray {
    display: flex;
    align-items: center;
}
.tray-icon {
    width: 16px;
    height: 16px;
    margin-right: 8px;
    fill: none;
    stroke: #fff;
}
.globe {
    width: 18px;
    height: 18px;
}
.clock {
    width: 78px;
    line-height: 18px;
    text-align: center;
}
.clock span {
    display: block;
}
.notices {
    position: relative;
    width: 43px;
    height: 40px;
    margin-right: 3px;
    border-right: 1px solid #555;
}
.notices svg {
    display: block;
    width: 18px;
    height: 18px;
    margin: 0 12px;
}
.badge {
    position: absolute;
    top: 18px;
    left: 20px;
    width: 18px;
    height: 18px;
    border: 1px solid #888;
    border-radius: 50%;
    background: #2b2b2b;
    font-size: 11px;
    line-height: 16px;
}
```
